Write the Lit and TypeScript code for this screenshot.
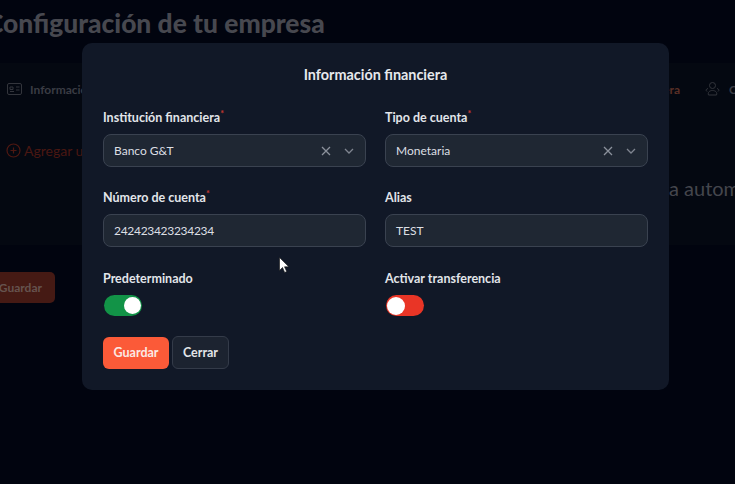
import { LitElement, html, css } from "lit";
import { customElement } from "lit/decorators.js";

@customElement("app-root")
export class AppRoot extends LitElement {
  static styles = css`
    :host {
      display: block;
      width: 735px;
      height: 484px;
      overflow: hidden;
      position: relative;
      background: #01040f;
      font-family: Lato, "Liberation Sans", sans-serif;
      -webkit-font-smoothing: antialiased;
    }
    .page {
      display: flex;
      flex-direction: column;
      height: 100%;
    }
    .title {
      margin: 5px 0 0 -14px;
      height: 58px;
      font-size: 26.4px;
      line-height: 36px;
      font-weight: 900;
      color: #47484f;
      white-space: nowrap;
    }
    .panel {
      height: 182px;
      background: #040811;
      display: flex;
      flex-direction: column;
    }
    .tabs {
      display: flex;
      align-items: center;
      height: 52px;
      padding-left: 7px;
      font-size: 12px;
      font-weight: 700;
      color: #3a3c44;
      white-space: nowrap;
    }
    .tab {
      display: flex;
      align-items: center;
      gap: 8px;
    }
    .spacer {
      flex: 1;
    }
    .tab-red {
      color: #5a2f26;
    }
    .tab-last {
      display: flex;
      align-items: center;
      gap: 9px;
      flex: none;
      width: 55px;
      box-sizing: border-box;
      padding-left: 25px;
    }
    .tab-last svg {
      flex: none;
    }
    .add {
      display: flex;
      align-items: center;
      gap: 3px;
      height: 30px;
      margin-top: 20px;
      padding-left: 6px;
      font-size: 14px;
      color: #4a1712;
      white-space: nowrap;
    }
    .auto {
      align-self: flex-end;
      width: 66px;
      margin-top: 9px;
      font-size: 20px;
      line-height: 28px;
      color: #44464d;
      white-space: nowrap;
    }
    .save-bg {
      margin: 27px 0 0 -20px;
      width: 75px;
      height: 31px;
      border-radius: 5px;
      background: #451a14;
      color: #66534e;
      font-size: 12px;
      font-weight: 700;
      display: flex;
      align-items: center;
      justify-content: flex-end;
      padding-right: 13px;
      box-sizing: border-box;
    }
    .modal {
      position: absolute;
      left: 82px;
      top: 43px;
      width: 587px;
      height: 347px;
      box-sizing: border-box;
      padding: 21px 21px 0;
      background: #111827;
      border-radius: 10px;
      display: flex;
      flex-direction: column;
    }
    h2 {
      margin: 0;
      font-size: 14.4px;
      line-height: 22px;
      font-weight: 700;
      text-align: center;
      color: #e6e8ec;
    }
    .grid {
      margin-top: 23px;
      display: grid;
      grid-template-columns: 263px 263px;
      column-gap: 19px;
      row-gap: 22px;
    }
    .field {
      display: flex;
      flex-direction: column;
      gap: 8px;
    }
    label {
      font-size: 12.5px;
      line-height: 17px;
      font-weight: 700;
      color: #e2e5ea;
      display: block;
    }
    label i {
      color: #c7382f;
      font-style: normal;
      font-size: 9px;
      vertical-align: 5px;
      line-height: 0;
    }
    .control {
      box-sizing: border-box;
      height: 33px;
      border: 1px solid #3a4250;
      border-radius: 8px;
      background: #1f2733;
      color: #dcdfe4;
      font-size: 12px;
      display: flex;
      align-items: center;
      padding: 0 10px;
    }
    .control span {
      flex: 1;
    }
    .control svg {
      display: block;
    }
    .digits {
      letter-spacing: -0.3px;
    }
    .x {
      margin-right: 13px;
    }
    .chevron {
      margin-right: 1px;
    }
    .toggle {
      width: 38px;
      height: 21px;
      margin-left: 1px;
      border-radius: 11px;
      position: relative;
    }
    .toggle::after {
      content: "";
      position: absolute;
      top: 2px;
      width: 17px;
      height: 17px;
      border-radius: 50%;
      background: #fff;
    }
    .on {
      background: #129347;
    }
    .on::after {
      right: 1px;
    }
    .off {
      background: #e93526;
    }
    .off::after {
      left: 1px;
      top: 1.5px;
      width: 18px;
      height: 18px;
    }
    .actions {
      margin-top: 20px;
      display: flex;
      align-items: center;
      gap: 3px;
    }
    button {
      font: 700 12.5px Lato, "Liberation Sans", sans-serif;
      height: 32px;
      border-radius: 6px;
      box-sizing: border-box;
      padding: 0;
    }
    .primary {
      width: 66px;
      background: #fb5a38;
      color: #fbe9e4;
      border: none;
    }
    .secondary {
      width: 57px;
      height: 33px;
      background: #1c2330;
      color: #e3e5e9;
      border: 1px solid #343b49;
    }
    .cursor {
      position: absolute;
      left: 279px;
      top: 257px;
    }
  `;

  renderSelect(value: string) {
    return html`<div class="control">
      <span>${value}</span>
      <svg class="x" width="10" height="10" viewBox="0 0 10 10" fill="none" stroke="#8b919c" stroke-width="1.3">
        <path d="M1 1l8 8M9 1l-8 8" />
      </svg>
      <svg class="chevron" width="10" height="6" viewBox="0 0 10 6" fill="none" stroke="#7f8590" stroke-width="1.3">
        <path d="M1 1l4 4 4-4" />
      </svg>
    </div>`;
  }

  render() {
    return html`
      <div class="page">
        <div class="title">Configuración de tu empresa</div>
        <div class="panel">
          <div class="tabs">
            <div class="tab">
              <svg width="15" height="12" viewBox="0 0 15 12" fill="none" stroke="#33353c">
                <rect x="0.5" y="0.5" width="14" height="11" rx="1.5" />
                <path d="M3 8.5h4M9 4h3.5M9 7h3.5M3 4h3v2.5h-3z" />
              </svg>
              Información
            </div>
            <div class="spacer"></div>
            <div class="tab-red">Información financiera</div>
            <div class="tab-last">
              <svg width="15" height="14" viewBox="0 0 15 14" fill="none" stroke="#33353c">
                <circle cx="7.5" cy="3.5" r="3" />
                <path d="M3 6.5c-2 .5-2.5 2-1 3M12 6.5c2 .5 2.5 2 1 3M3.5 13c-1-2.500 1-4.500 4-4.500s5 2 4 4.500z" />
              </svg>
              <span>Configuración</span>
            </div>
          </div>
          <div class="add">
            <svg width="15" height="15" viewBox="0 0 15 15" fill="none" stroke="#4f1812" stroke-width="1.2">
              <circle cx="7.5" cy="7.5" r="6.5" />
              <path d="M7.5 4.500v6M4.500 7.500h6" />
            </svg>
            Agregar una
          </div>
          <div class="auto">a automática</div>
        </div>
        <div class="save-bg">Guardar</div>
      </div>

      <div class="modal">
        <h2>Información financiera</h2>
        <div class="grid">
          <div class="field">
            <label>Institución financiera<i>*</i></label>
            ${this.renderSelect("Banco G&T")}
          </div>
          <div class="field">
            <label>Tipo de cuenta<i>*</i></label>
            ${this.renderSelect("Monetaria")}
          </div>
          <div class="field">
            <label>Número de cuenta<i>*</i></label>
            <div class="control"><span class="digits">242423423234234</span></div>
          </div>
          <div class="field">
            <label>Alias</label>
            <div class="control"><span>TEST</span></div>
          </div>
        </div>
        <div class="grid">
          <div class="field">
            <label>Predeterminado</label>
            <div class="toggle on"></div>
          </div>
          <div class="field">
            <label>Activar transferencia</label>
            <div class="toggle off"></div>
          </div>
        </div>
        <div class="actions">
          <button class="primary">Guardar</button>
          <button class="secondary">Cerrar</button>
        </div>
      </div>

      <svg class="cursor" width="11" height="17" viewBox="0 0 11 17">
        <path d="M0.5 0.5v13l3-3 2.200 5 2-1-2.200-4.700h4.300z" fill="#fff" stroke="#111" stroke-width="0.6" />
      </svg>
    `;
  }
}
